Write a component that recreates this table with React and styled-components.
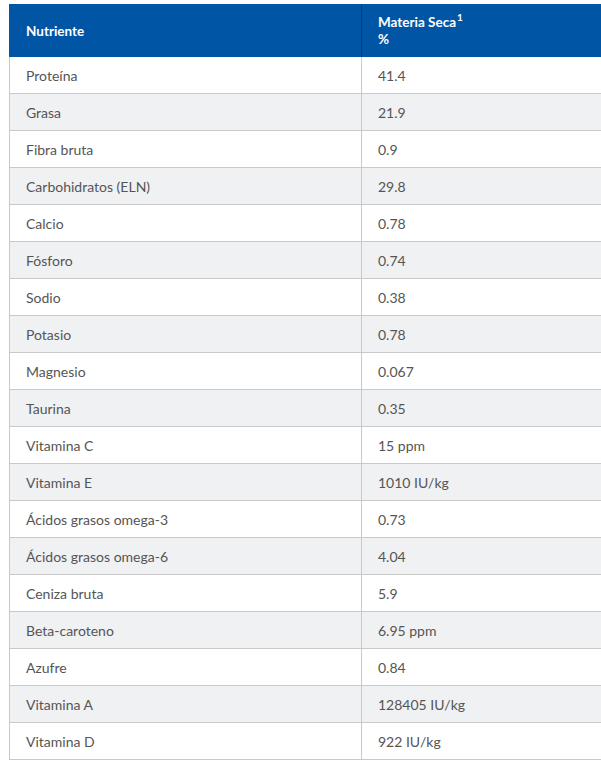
import React from 'react'
import styled, { createGlobalStyle } from 'styled-components'

const GlobalStyle = createGlobalStyle`
    html, body {
        margin: 0;
        padding: 0;
        background: #FFF;
        overflow: hidden;
    }
    body {
        font-family: Lato, "Open Sans", sans-serif;
    }
`

const Wrapper = styled.div`
    padding: 4px 0 0 9px;
    width: 720px;
`

const Table = styled.table`
    width: 100%;
    border-collapse: collapse;
    font-size: 14px;
    color: #555;
`

const HeadCell = styled.th`
    background-color: #0055a5;
    color: #FFF;
    font-weight: 700;
    font-size: 13.5px;
    text-align: left;
    height: 53px;
    padding: 1px 16px 0;
    line-height: 17px;
    box-sizing: border-box;
    border-left: 1px solid #0055a5;
    width: ${props => props.$width || 'auto'};

    & + & {
        border-left: 1px solid #003d7a;
    }
`

const Sup = styled.sup`
    font-size: 10px;
    line-height: 0;
    vertical-align: 6px;
    margin-left: 1px;
`

const Row = styled.tr`
    background-color: ${props => props.$striped ? '#f0f1f3' : '#FFF'};
`

const Cell = styled.td`
    padding: 0 16px;
    border: 1px solid #c9c9c9;
    border-top: none;
    height: 36px;
    line-height: 17px;
`

const rows = [
    ['Proteína', '41.4'],
    ['Grasa', '21.9'],
    ['Fibra bruta', '0.9'],
    ['Carbohidratos (ELN)', '29.8'],
    ['Calcio', '0.78'],
    ['Fósforo', '0.74'],
    ['Sodio', '0.38'],
    ['Potasio', '0.78'],
    ['Magnesio', '0.067'],
    ['Taurina', '0.35'],
    ['Vitamina C', '15 ppm'],
    ['Vitamina E', '1010 IU/kg'],
    ['Ácidos grasos omega-3', '0.73'],
    ['Ácidos grasos omega-6', '4.04'],
    ['Ceniza bruta', '5.9'],
    ['Beta-caroteno', '6.95 ppm'],
    ['Azufre', '0.84'],
    ['Vitamina A', '128405 IU/kg'],
    ['Vitamina D', '922 IU/kg'],
]

function App() {
    return (
        <Wrapper>
            <GlobalStyle />
            <Table>
                <thead>
                    <tr>
                        <HeadCell $width="352px">Nutriente</HeadCell>
                        <HeadCell>
                            Materia Seca<Sup>1</Sup>
                            <br />%
                        </HeadCell>
                    </tr>
                </thead>
                <tbody>
                    {rows.map(([name, value], i) => (
                        <Row key={name} $striped={i % 2 === 1}>
                            <Cell>{name}</Cell>
                            <Cell>{value}</Cell>
                        </Row>
                    ))}
                </tbody>
            </Table>
        </Wrapper>
    )
}

export default App
